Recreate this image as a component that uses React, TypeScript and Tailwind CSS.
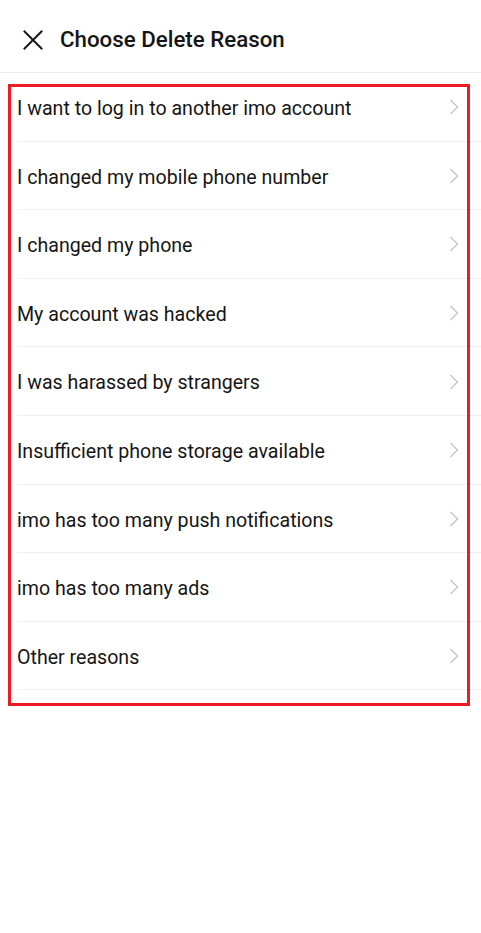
import React from "react";

const reasons = [
  "I want to log in to another imo account",
  "I changed my mobile phone number",
  "I changed my phone",
  "My account was hacked",
  "I was harassed by strangers",
  "Insufficient phone storage available",
  "imo has too many push notifications",
  "imo has too many ads",
  "Other reasons",
];

export default function App() {
  return (
    <div
      className="relative w-[481px] h-[933px] bg-white text-[#151515]"
      style={{ fontFamily: "Roboto, 'Noto Sans', sans-serif" }}
    >
      <div className="flex h-[73px] items-center border-b border-[#eeeeee] pl-[23px] pt-[7px]">
        <svg width="20" height="20" viewBox="0 0 20 20" className="shrink-0">
          <path d="M1.5 1.5 L18.5 18.5 M18.5 1.5 L1.5 18.5" stroke="#1a1a1a" strokeWidth="2" strokeLinecap="square" />
        </svg>
        <div className="ml-[17px] text-[22.3px] font-medium leading-none">
          Choose Delete Reason
        </div>
      </div>
      <div className="flex flex-col">
        {reasons.map((r) => (
          <div
            key={r}
            className="ml-[17px] flex h-[68.6px] items-center justify-between border-b border-[#f0f0f0] pr-[22px]"
          >
            <span className="pt-[4px] text-[19.6px] leading-none">{r}</span>
            <svg width="10" height="16" viewBox="0 0 10 16" className="mt-[1px]">
              <path d="M1.5 1 L8.5 8 L1.5 15" fill="none" stroke="#c8c8c8" strokeWidth="1.5" />
            </svg>
          </div>
        ))}
      </div>
      <div className="pointer-events-none absolute left-[8px] top-[84px] h-[622px] w-[462px] border-[3px] border-[#ed1c24]" />
    </div>
  );
}
